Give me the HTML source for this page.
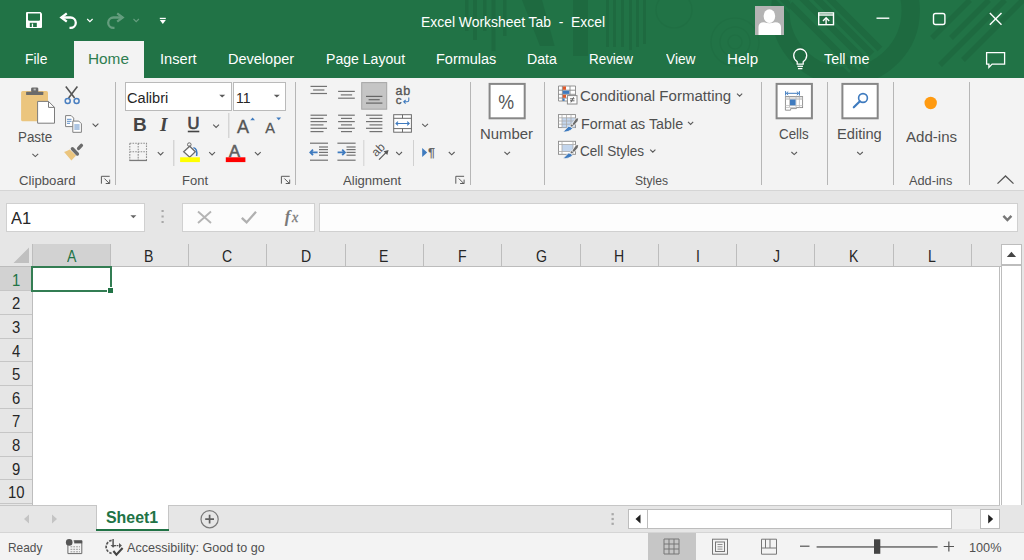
<!DOCTYPE html>
<html><head><meta charset="utf-8"><style>
html,body{margin:0;padding:0;width:1024px;height:560px;overflow:hidden;background:#fff;}
body{position:relative;font-family:"Liberation Sans",sans-serif;}
.r{position:absolute;}
.t{position:absolute;white-space:pre;transform-origin:0 0;}
svg{position:absolute;left:0;top:0;}
</style></head><body>
<div class="r" style="left:0px;top:0px;width:1024px;height:78px;background:#217346;"></div><div class="r" style="left:74px;top:41px;width:70px;height:37px;background:#f3f3f3;"></div><div class="r" style="left:0px;top:78px;width:1024px;height:112px;background:#f3f3f3;"></div><div class="r" style="left:0px;top:190px;width:1024px;height:1px;background:#d5d5d5;"></div><div class="r" style="left:0px;top:191px;width:1024px;height:53px;background:#e6e6e6;"></div><div class="r" style="left:115px;top:82px;width:1px;height:103px;background:#b6b6b6;"></div><div class="r" style="left:295px;top:82px;width:1px;height:103px;background:#b6b6b6;"></div><div class="r" style="left:470px;top:82px;width:1px;height:103px;background:#b6b6b6;"></div><div class="r" style="left:544px;top:82px;width:1px;height:103px;background:#b6b6b6;"></div><div class="r" style="left:761px;top:82px;width:1px;height:103px;background:#b6b6b6;"></div><div class="r" style="left:827px;top:82px;width:1px;height:103px;background:#b6b6b6;"></div><div class="r" style="left:893px;top:82px;width:1px;height:103px;background:#b6b6b6;"></div><div class="r" style="left:969px;top:82px;width:1px;height:103px;background:#b6b6b6;"></div><div class="r" style="left:6px;top:203px;width:139px;height:29px;background:#fff;box-sizing:border-box;border:1px solid #d0d0d0;"></div><div class="r" style="left:182px;top:203px;width:133px;height:29px;background:#fcfcfc;box-sizing:border-box;border:1px solid #d0d0d0;"></div><div class="r" style="left:319px;top:203px;width:699px;height:29px;background:#fdfdfd;box-sizing:border-box;border:1px solid #d0d0d0;"></div><div class="r" style="left:0px;top:244px;width:1001px;height:23px;background:#e6e6e6;"></div><div class="r" style="left:32px;top:244px;width:78px;height:22px;background:#d2d2d2;"></div><div class="r" style="left:0px;top:266px;width:1001px;height:1px;background:#bcbcbc;"></div><div class="r" style="left:32px;top:244px;width:1px;height:22px;background:#bdbdbd;"></div><div class="r" style="left:110px;top:244px;width:1px;height:22px;background:#bdbdbd;"></div><div class="r" style="left:188px;top:244px;width:1px;height:22px;background:#bdbdbd;"></div><div class="r" style="left:266px;top:244px;width:1px;height:22px;background:#bdbdbd;"></div><div class="r" style="left:345px;top:244px;width:1px;height:22px;background:#bdbdbd;"></div><div class="r" style="left:423px;top:244px;width:1px;height:22px;background:#bdbdbd;"></div><div class="r" style="left:501px;top:244px;width:1px;height:22px;background:#bdbdbd;"></div><div class="r" style="left:580px;top:244px;width:1px;height:22px;background:#bdbdbd;"></div><div class="r" style="left:658px;top:244px;width:1px;height:22px;background:#bdbdbd;"></div><div class="r" style="left:736px;top:244px;width:1px;height:22px;background:#bdbdbd;"></div><div class="r" style="left:814px;top:244px;width:1px;height:22px;background:#bdbdbd;"></div><div class="r" style="left:893px;top:244px;width:1px;height:22px;background:#bdbdbd;"></div><div class="r" style="left:971px;top:244px;width:1px;height:22px;background:#bdbdbd;"></div><div class="r" style="left:0px;top:267px;width:33px;height:238px;background:#e6e6e6;"></div><div class="r" style="left:0px;top:267px;width:32px;height:23px;background:#d2d2d2;"></div><div class="r" style="left:32px;top:267px;width:1px;height:238px;background:#bdbdbd;"></div><div class="r" style="left:0px;top:290px;width:32px;height:1px;background:#c6c6c6;"></div><div class="r" style="left:0px;top:314px;width:32px;height:1px;background:#c6c6c6;"></div><div class="r" style="left:0px;top:338px;width:32px;height:1px;background:#c6c6c6;"></div><div class="r" style="left:0px;top:361px;width:32px;height:1px;background:#c6c6c6;"></div><div class="r" style="left:0px;top:385px;width:32px;height:1px;background:#c6c6c6;"></div><div class="r" style="left:0px;top:408px;width:32px;height:1px;background:#c6c6c6;"></div><div class="r" style="left:0px;top:432px;width:32px;height:1px;background:#c6c6c6;"></div><div class="r" style="left:0px;top:456px;width:32px;height:1px;background:#c6c6c6;"></div><div class="r" style="left:0px;top:479px;width:32px;height:1px;background:#c6c6c6;"></div><div class="r" style="left:0px;top:503px;width:32px;height:1px;background:#c6c6c6;"></div><div class="r" style="left:33px;top:267px;width:966px;height:238px;background:#ffffff;"></div><div class="r" style="left:999px;top:266px;width:1px;height:240px;background:#bdbdbd;"></div><div class="r" style="left:31px;top:266px;width:81px;height:26px;background:transparent;box-sizing:border-box;border:2px solid #337d53;"></div><div class="r" style="left:108px;top:288px;width:5px;height:5px;background:#217346;border:1px solid #fff;box-sizing:content-box;left:107px;top:287px;"></div><div class="r" style="left:1001px;top:244px;width:21px;height:21px;background:#fff;box-sizing:border-box;border:1px solid #bdbdbd;"></div><div class="r" style="left:1001px;top:265px;width:21px;height:242px;background:#fff;box-sizing:border-box;border:1px solid #bdbdbd;"></div><div class="r" style="left:1022px;top:244px;width:2px;height:262px;background:#e6e6e6;"></div><div class="r" style="left:0px;top:505px;width:1024px;height:28px;background:#e6e6e6;"></div><div class="r" style="left:0px;top:505px;width:1000px;height:1px;background:#c6c6c6;"></div><div class="r" style="left:96px;top:505px;width:73px;height:25px;background:#fff;box-sizing:border-box;border-left:1px solid #c6c6c6;border-right:1px solid #c6c6c6;"></div><div class="r" style="left:96px;top:529px;width:73px;height:2px;background:#217346;"></div><div class="r" style="left:628px;top:509px;width:20px;height:20px;background:#fff;box-sizing:border-box;border:1px solid #bdbdbd;"></div><div class="r" style="left:647px;top:509px;width:305px;height:20px;background:#fff;box-sizing:border-box;border:1px solid #bdbdbd;"></div><div class="r" style="left:952px;top:509px;width:28px;height:20px;background:#f0f0f0;"></div><div class="r" style="left:980px;top:509px;width:20px;height:20px;background:#fff;box-sizing:border-box;border:1px solid #bdbdbd;"></div><div class="r" style="left:0px;top:533px;width:1024px;height:27px;background:#f3f3f3;"></div><div class="r" style="left:0px;top:532px;width:1024px;height:1px;background:#d5d5d5;"></div><div class="r" style="left:648px;top:533px;width:48px;height:27px;background:#c6c6c6;"></div>
<svg width="1024" height="560" viewBox="0 0 1024 560">
<!-- header decorations -->
<defs><clipPath id="hc"><rect x="0" y="0" width="1024" height="78"/></clipPath></defs><g clip-path="url(#hc)">
<g fill="#1e6a40">
  <rect x="465" y="0" width="3.5" height="31"/><rect x="473" y="0" width="4" height="40"/>
  <rect x="483" y="0" width="3.5" height="31"/><rect x="491.5" y="0" width="4" height="51"/>
  <rect x="503" y="0" width="3.5" height="36"/>
  <path d="M522,0 h20 l12.6,46 h-14.6z"/><rect x="573" y="0" width="15" height="56"/>
  <rect x="606" y="0" width="3" height="47"/><rect x="613" y="0" width="3" height="47"/>
  <rect x="621" y="0" width="3" height="47"/><rect x="629" y="0" width="3" height="50"/>
  <rect x="636" y="0" width="3" height="47"/><rect x="643" y="0" width="3" height="44"/>
</g>
<g fill="none" stroke="#1e6a40">
  <circle cx="845.5" cy="10.8" r="65.2" stroke-width="18.3"/>
</g>
<g fill="none" stroke="#1e6a40" stroke-width="1.2" opacity="0.4">
  <circle cx="674" cy="10" r="18"/>
  <circle cx="735" cy="42" r="24"/><circle cx="735" cy="42" r="15"/><circle cx="735" cy="42" r="7"/>
</g>
<g stroke="#1e6a40" stroke-width="6.5">
  <line x1="790" y1="4" x2="852" y2="66"/><line x1="801" y1="-3" x2="862" y2="58"/>
  <line x1="812" y1="-6" x2="872" y2="54"/><line x1="823" y1="-8" x2="880" y2="49"/>
</g>
<defs><clipPath id="ringc"><path d="M845.5,10.8 m-74.3,0 a74.3,74.3 0 1 0 148.6,0 a74.3,74.3 0 1 0 -148.6,0z M845.5,10.8 m-56,0 a56,56 0 1 1 112,0 a56,56 0 1 1 -112,0z" clip-rule="evenodd"/></clipPath></defs>
<g stroke="#217346" stroke-width="2.6" clip-path="url(#ringc)">
  <line x1="774" y1="-4" x2="850" y2="72"/><line x1="784" y1="-6" x2="860" y2="70"/>
  <line x1="795" y1="-5" x2="868" y2="68"/>
</g>
<g stroke="#1e6a40" stroke-width="5.5">
  <line x1="932" y1="38" x2="970" y2="0"/><line x1="951" y1="38" x2="989" y2="0"/>
  <line x1="940" y1="65" x2="1005" y2="0"/><line x1="963" y1="60" x2="1024" y2="-1"/>
</g>
</g>
<!-- QAT -->
<g>
  <path d="M27,12 h13.5 l1.5,1.5 v13.4 a1,1 0 0 1 -1,1 h-14 a1,1 0 0 1 -1,-1 v-13.9 a1,1 0 0 1 1,-1z" fill="#fff"/>
  <path d="M28,13.6 h12 v6 a1.2,1.2 0 0 1 -1.2,1.2 h-9.6 a1.2,1.2 0 0 1 -1.2,-1.2z" fill="#217346"/>
  <rect x="29.8" y="22.8" width="7" height="4.2" fill="#217346"/>
  <rect x="31.8" y="23.6" width="1.3" height="3.4" fill="#fff"/>
  <path d="M61.5,17.5 H70.5 A5.3,5.2 0 0 1 70.5,27.9 H69.5" fill="none" stroke="#fff" stroke-width="2.3"/>
  <path d="M66.8,13.3 L61.3,17.5 L66.8,21.7" fill="none" stroke="#fff" stroke-width="2.3" stroke-linejoin="miter"/>
  <path d="M87.2,19 l2.7,2.6 l2.7,-2.6" fill="none" stroke="#fff" stroke-width="1.2"/>
  <g opacity="0.3">
    <path d="M122.5,17.5 H113.5 A5.3,5.2 0 0 0 113.5,27.9 H114.5" fill="none" stroke="#fff" stroke-width="2.3"/>
    <path d="M117.2,13.3 L122.7,17.5 L117.2,21.7" fill="none" stroke="#fff" stroke-width="2.3"/>
    <path d="M133.5,19 l2.7,2.6 l2.7,-2.6" fill="none" stroke="#fff" stroke-width="1.2"/>
  </g>
  <rect x="159.8" y="17.8" width="6" height="1.3" fill="#fff"/>
  <path d="M159.8,19.9 h6 l-3,4.1z" fill="#fff"/>
</g>
<!-- avatar & window controls -->
<rect x="755" y="6" width="29" height="29" fill="#b4b4b4"/>
<ellipse cx="769.4" cy="16.1" rx="5.8" ry="6.8" fill="#fff"/>
<path d="M758.5,35 V27 Q758.5,22.5 764,22.3 Q769.4,24 775,22.3 Q781,22.5 781,27 V35z" fill="#fff"/>
<g fill="none" stroke="#fff" stroke-width="1.4">
  <rect x="818.7" y="12.9" width="14.8" height="11.8"/>
  <line x1="818.7" y1="15" x2="833.5" y2="15"/>
  <line x1="826.1" y1="18" x2="826.1" y2="24.7"/>
  <path d="M823,21 l3.1,-3.2 l3.1,3.2"/>
  <line x1="876.5" y1="18.2" x2="889.3" y2="18.2"/>
  <rect x="933.5" y="13.5" width="11.4" height="11" rx="2"/>
  <line x1="989.8" y1="13" x2="1001.5" y2="24.7"/><line x1="1001.5" y1="13" x2="989.8" y2="24.7"/>
</g>
<!-- tell me bulb & comment -->
<g fill="none" stroke="#fff" stroke-width="1.3">
  <path d="M797.2,64.2 v-2.4 q-3.5,-2.6 -3.5,-6.3 a6.5,6.5 0 0 1 13,0 q0,3.7 -3.5,6.3 v2.4z"/>
  <line x1="797.4" y1="66.3" x2="803" y2="66.3"/>
  <line x1="798" y1="68.6" x2="802.4" y2="68.6"/>
  <path d="M986.6,52.6 h18 v11.5 h-12.5 l-3.2,3.3 v-3.3 h-2.3z"/>
</g>
<rect x="21.1" y="90.9" width="26.9" height="30.4" rx="1.6" fill="#ebc57e"/>
<rect x="26.1" y="91.7" width="17.2" height="3.4" rx="0.6" fill="#6b6b6b"/>
<rect x="31.1" y="87.4" width="7.2" height="5" rx="1.4" fill="#6b6b6b"/>
<rect x="33.6" y="88.6" width="2.2" height="1.8" fill="#b9b9b9"/>
<path d="M37.6,101.4 h10.9 l6,6 v15.8 h-16.9z" fill="#fff" stroke="#7c7c7c" stroke-width="1"/>
<path d="M48.5,101.4 v6 h6" fill="none" stroke="#7c7c7c" stroke-width="1"/>
<path d="M32.4,153.8 l2.9,2.8 l2.9,-2.8" fill="none" stroke="#5a5a5a" stroke-width="1.1"/>
<path d="M65.8,86.6 L74.6,98 M77.4,86.6 L68.6,98" stroke="#555" stroke-width="1.6" fill="none"/>
<circle cx="67.7" cy="100.9" r="2.5" fill="none" stroke="#4a7fc0" stroke-width="1.5"/>
<circle cx="76.6" cy="100.9" r="2.5" fill="none" stroke="#4a7fc0" stroke-width="1.5"/>
<path d="M65.6,115.6 h5.6 l2.5,2.5 v8.5 h-8.1z" fill="#fff" stroke="#808080" stroke-width="1"/>
<path d="M67,119.3 h4.5 M67,121.3 h4.5 M67,123.3 h3" stroke="#4a7fc0" stroke-width="0.9"/>
<path d="M72.8,121.1 h6 l2.6,2.6 v8.6 h-8.6z" fill="#fff" stroke="#808080" stroke-width="1"/>
<path d="M74.3,125 h5.3 M74.3,127 h5.3 M74.3,129 h5.3" stroke="#4a7fc0" stroke-width="0.9"/>
<path d="M92.6,123.6 l2.9,2.8 l2.9,-2.8" fill="none" stroke="#5a5a5a" stroke-width="1.1"/>
<path d="M64.1,152 Q66.5,151.6 69.7,149.6 L76.1,155.5 L71.4,160.6z" fill="#ebc57e"/>
<path d="M72.4,148.8 L77.4,154" stroke="#6b6b6b" stroke-width="3.4" stroke-linecap="round"/>
<path d="M78.6,148.4 L81.4,145.4" stroke="#6b6b6b" stroke-width="3.4" stroke-linecap="round"/>
<path d="M101.4,183.70000000000002 V176.3 H109.7 M104.4,178.5 L109.4,183.5 M105.7,183.5 H109.7 V179.60000000000002" fill="none" stroke="#5a5a5a" stroke-width="1"/>
<rect x="125.5" y="82.5" width="106" height="28" fill="#fff" stroke="#bababa" stroke-width="1"/>
<rect x="233.5" y="82.5" width="52" height="28" fill="#fff" stroke="#bababa" stroke-width="1"/>
<path d="M219.2,94.8 h6 l-3.0,2.8z" fill="#5a5a5a"/>
<path d="M273.8,94.8 h6 l-3.0,2.8z" fill="#5a5a5a"/>
<text x="133" y="130.5" font-family="Liberation Sans" font-weight="700" font-size="19" fill="#444">B</text>
<text x="160" y="130.5" font-family="Liberation Serif" font-style="italic" font-weight="700" font-size="19" fill="#444">I</text>
<text x="187.6" y="129" font-family="Liberation Sans" font-size="16.5" fill="#444" stroke="#444" stroke-width="0.7">U</text>
<rect x="187.8" y="130.7" width="11.5" height="1.6" fill="#444"/>
<path d="M213.2,124.6 l2.9,2.8 l2.9,-2.8" fill="none" stroke="#5a5a5a" stroke-width="1.1"/>
<rect x="228.3" y="113" width="1" height="25" fill="#c8c8c8"/>
<text x="237" y="133" font-family="Liberation Sans" font-size="18" fill="#555" stroke="#555" stroke-width="0.35">A</text>
<path d="M250.2,120.2 l2.4,-2.8 l2.4,2.8z" fill="#3f7bbf"/>
<text x="265.3" y="132.5" font-family="Liberation Sans" font-size="14.5" fill="#555" stroke="#555" stroke-width="0.3">A</text>
<path d="M276.3,117.5 l2.4,2.8 l2.4,-2.8z" fill="#3f7bbf"/>
<path d="M129.8,143.3 H146.5 V160.3 M129.8,143.3 V160.3 M138.2,143.3 V160.3 M129.8,151.8 H146.5" fill="none" stroke="#8f8f8f" stroke-width="1.1" stroke-dasharray="1.6,1.1"/>
<rect x="129.3" y="159.8" width="17.7" height="1.3" fill="#7a7a7a"/>
<path d="M157.8,152.2 l2.8,2.8 l2.8,-2.8" fill="none" stroke="#5a5a5a" stroke-width="1.1"/>
<rect x="173.3" y="140" width="1" height="26" fill="#c8c8c8"/>
<path d="M183.7,151.7 L189.7,146.2 L195.3,151.7 L189.7,157.2 z" fill="#fff" stroke="#6b6b6b" stroke-width="1.3"/>
<circle cx="189.3" cy="144.6" r="1.8" fill="none" stroke="#6b6b6b" stroke-width="1"/>
<path d="M193.4,147.6 Q197.8,148.8 196.6,156" fill="none" stroke="#3f7bbf" stroke-width="1.5"/>
<rect x="180.1" y="157.3" width="19.8" height="4.8" fill="#ffff00"/>
<path d="M209.2,152.2 l2.9,2.7 l2.9,-2.7" fill="none" stroke="#5a5a5a" stroke-width="1.1"/>
<text x="229" y="156.8" font-family="Liberation Sans" font-size="16.5" fill="#606060" stroke="#606060" stroke-width="0.6">A</text>
<rect x="225.8" y="157.3" width="19.6" height="4.8" fill="#ff0000"/>
<path d="M254.9,152.2 l2.9,2.7 l2.9,-2.7" fill="none" stroke="#5a5a5a" stroke-width="1.1"/>
<path d="M281.4,183.70000000000002 V176.3 H289.7 M284.4,178.5 L289.4,183.5 M285.7,183.5 H289.7 V179.60000000000002" fill="none" stroke="#5a5a5a" stroke-width="1"/>
<rect x="310.5" y="85.80000000000001" width="16.5" height="1.2" fill="#737373"/>
<rect x="313.1" y="89.4" width="11.299999999999955" height="1.2" fill="#737373"/>
<rect x="310.5" y="92.9" width="16.5" height="1.2" fill="#737373"/>
<rect x="338.1" y="90.80000000000001" width="16.69999999999999" height="1.2" fill="#737373"/>
<rect x="340.8" y="94.30000000000001" width="11.300000000000011" height="1.2" fill="#737373"/>
<rect x="338.1" y="97.60000000000001" width="16.69999999999999" height="1.2" fill="#737373"/>
<rect x="361.7" y="82.6" width="25" height="26.6" fill="#c5c5c5" stroke="#a6a6a6" stroke-width="1"/>
<rect x="366" y="95.80000000000001" width="16.399999999999977" height="1.2" fill="#666"/>
<rect x="368.6" y="99.10000000000001" width="11.099999999999966" height="1.2" fill="#666"/>
<rect x="366" y="102.5" width="16.399999999999977" height="1.2" fill="#666"/>
<text x="395.6" y="95.3" font-family="Liberation Sans" font-size="12.5" letter-spacing="0.6" fill="#555" stroke="#555" stroke-width="0.35">ab</text>
<text x="395.8" y="103.8" font-family="Liberation Sans" font-size="11.5" fill="#555" stroke="#555" stroke-width="0.35">c</text>
<path d="M408.8,97.6 v2.6 q0,1.6 -1.6,1.6 h-3 M405.6,100 l-1.8,1.8 l1.8,1.8" fill="none" stroke="#3f7bbf" stroke-width="1.1"/>
<rect x="310.5" y="114.60000000000001" width="16.5" height="1.2" fill="#737373"/>
<rect x="338.1" y="114.60000000000001" width="16.69999999999999" height="1.2" fill="#737373"/>
<rect x="366" y="114.60000000000001" width="16.399999999999977" height="1.2" fill="#737373"/>
<rect x="310.5" y="117.80000000000001" width="13.0" height="1.2" fill="#737373"/>
<rect x="341" y="117.80000000000001" width="11" height="1.2" fill="#737373"/>
<rect x="369.5" y="117.80000000000001" width="12.899999999999977" height="1.2" fill="#737373"/>
<rect x="310.5" y="121.0" width="16.5" height="1.2" fill="#737373"/>
<rect x="338.1" y="121.0" width="16.69999999999999" height="1.2" fill="#737373"/>
<rect x="366" y="121.0" width="16.399999999999977" height="1.2" fill="#737373"/>
<rect x="310.5" y="124.30000000000001" width="13.0" height="1.2" fill="#737373"/>
<rect x="341" y="124.30000000000001" width="11" height="1.2" fill="#737373"/>
<rect x="369.5" y="124.30000000000001" width="12.899999999999977" height="1.2" fill="#737373"/>
<rect x="310.5" y="127.70000000000002" width="16.5" height="1.2" fill="#737373"/>
<rect x="338.1" y="127.70000000000002" width="16.69999999999999" height="1.2" fill="#737373"/>
<rect x="366" y="127.70000000000002" width="16.399999999999977" height="1.2" fill="#737373"/>
<rect x="310.5" y="131.0" width="13.0" height="1.2" fill="#737373"/>
<rect x="341" y="131.0" width="11" height="1.2" fill="#737373"/>
<rect x="369.5" y="131.0" width="12.899999999999977" height="1.2" fill="#737373"/>
<rect x="393.7" y="114.7" width="17.7" height="17.5" fill="#fff" stroke="#6b6b6b" stroke-width="1"/>
<path d="M393.7,118.3 H411.4 M393.7,128.6 H411.4 M402.5,114.7 V118.3 M402.5,128.6 V132.2" stroke="#6b6b6b" stroke-width="1" fill="none"/>
<path d="M396,123.5 H409.2 M398,121.6 l-2,1.9 l2,1.9 M407.2,121.6 l2,1.9 l-2,1.9" stroke="#3f7bbf" stroke-width="1.1" fill="none"/>
<path d="M422.2,123.8 l2.9,2.8 l2.9,-2.8" fill="none" stroke="#5a5a5a" stroke-width="1.1"/>
<rect x="310" y="142.6" width="18" height="1.2" fill="#737373"/>
<rect x="310" y="159.6" width="18" height="1.2" fill="#737373"/>
<rect x="319" y="146.4" width="9" height="1.2" fill="#737373"/>
<rect x="346.5" y="146.4" width="9.100000000000023" height="1.2" fill="#737373"/>
<rect x="319" y="149.0" width="9" height="1.2" fill="#737373"/>
<rect x="346.5" y="149.0" width="9.100000000000023" height="1.2" fill="#737373"/>
<rect x="319" y="151.8" width="9" height="1.2" fill="#737373"/>
<rect x="346.5" y="151.8" width="9.100000000000023" height="1.2" fill="#737373"/>
<rect x="319" y="154.6" width="9" height="1.2" fill="#737373"/>
<rect x="346.5" y="154.6" width="9.100000000000023" height="1.2" fill="#737373"/>
<rect x="337.4" y="142.6" width="18.200000000000045" height="1.2" fill="#737373"/>
<rect x="337.4" y="159.6" width="18.200000000000045" height="1.2" fill="#737373"/>
<path d="M317.6,152.4 H310.5 M313,149.6 l-2.7,2.8 l2.7,2.8" stroke="#3f7bbf" stroke-width="1.8" fill="none"/>
<path d="M337.6,152.4 H344.8 M342.2,149.6 l2.7,2.8 l-2.7,2.8" stroke="#3f7bbf" stroke-width="1.8" fill="none"/>
<rect x="363.3" y="140" width="1" height="26" fill="#d0d0d0"/>
<text x="0" y="0" font-family="Liberation Sans" font-size="12" fill="#555" transform="translate(376.3,157.3) rotate(-45)">ab</text>
<path d="M379,159.6 L386.2,152.4" stroke="#555" stroke-width="1.2" fill="none"/>
<path d="M388.6,150 L383.6,151.3 L387.3,155z" fill="#555"/>
<path d="M396.2,152 l2.9,2.8 l2.9,-2.8" fill="none" stroke="#5a5a5a" stroke-width="1.1"/>
<rect x="413" y="140" width="1" height="26" fill="#d0d0d0"/>
<path d="M422.2,148 L427.2,152.5 L422.2,157z" fill="#3f7bbf"/>
<text x="428" y="157.3" font-family="Liberation Sans" font-size="12.5" font-weight="700" fill="#666">¶</text>
<path d="M448.8,152 l2.9,2.8 l2.9,-2.8" fill="none" stroke="#5a5a5a" stroke-width="1.1"/>
<path d="M455.8,183.70000000000002 V176.3 H464.1 M458.8,178.5 L463.8,183.5 M460.1,183.5 H464.1 V179.60000000000002" fill="none" stroke="#5a5a5a" stroke-width="1"/>
<rect x="489.6" y="83.9" width="35.1" height="34.4" fill="#fff" stroke="#878787" stroke-width="2"/>
<text x="0" y="0" font-family="Liberation Sans" font-size="21" fill="#555" transform="translate(498.2,108.8) scale(0.85,1)">%</text>
<path d="M504.4,151.8 l2.8,2.7 l2.8,-2.7" fill="none" stroke="#5a5a5a" stroke-width="1.1"/>
<path d="M558.5,86 H575.5 V101 H558.5z M558.5,90.2 H575.5 M558.5,94.3 H575.5 M558.5,98 H575.5 M562.4,86 V101 M570,86 V101" fill="#fff" stroke="#8a8a8a" stroke-width="0.9"/>
<rect x="562.8" y="86.4" width="3.2" height="3.4" fill="#e05a2b"/>
<rect x="562.8" y="90.7" width="6.5" height="3.2" fill="#3f7bbf"/>
<rect x="562.8" y="94.8" width="3.2" height="3" fill="#e05a2b"/>
<rect x="562.8" y="98.4" width="1.8" height="2.5" fill="#3f7bbf"/>
<rect x="567.4" y="95.6" width="9.6" height="8.4" fill="#fff" stroke="#8a8a8a" stroke-width="1"/>
<path d="M570,98.8 h4.5 M570,100.8 h4.5 M573.6,97.2 L570.9,102.4" stroke="#555" stroke-width="0.9" fill="none"/>
<path d="M737,93.6 l2.6,2.6 l2.6,-2.6" fill="none" stroke="#5a5a5a" stroke-width="1.1"/>
<rect x="558.5" y="114.6" width="17" height="13" fill="#fff" stroke="#8a8a8a" stroke-width="0.9"/>
<rect x="562" y="117.8" width="13" height="9.5" fill="#c3d6ee"/>
<path d="M558.5,117.8 H575.5 M558.5,121.0 H575.5 M558.5,124.19999999999999 H575.5 M562,114.6 V127.6 M566.5,114.6 V127.6 M571,114.6 V127.6" stroke="#a9a9a9" stroke-width="0.8" fill="none"/>
<path d="M572.2,124.39999999999999 L576,118.8 L578.2,118.19999999999999 L577.6,121.0 L573.6,125.6z" fill="#6b6b6b" stroke="#f3f3f3" stroke-width="1.4"/>
<path d="M572.2,124.39999999999999 L576,118.8 L578.2,118.19999999999999 L577.6,121.0 L573.6,125.6z" fill="#6b6b6b"/>
<circle cx="571.8" cy="125.6" r="1.5" fill="#6b6b6b" stroke="#f3f3f3" stroke-width="0.8"/>
<path d="M563,131.9 L568.6,126.19999999999999 Q571,126.5 572.6,128.6 Q569,132.4 563,131.9z" fill="#3f7bbf" stroke="#f3f3f3" stroke-width="0.8"/>
<path d="M688,121.8 l2.6,2.6 l2.6,-2.6" fill="none" stroke="#5a5a5a" stroke-width="1.1"/>
<rect x="558.5" y="141.3" width="17" height="13" fill="#fff" stroke="#8a8a8a" stroke-width="0.9"/>
<rect x="562" y="144.5" width="11" height="7" fill="#c3d6ee"/>
<path d="M558.5,144.5 H575.5 M558.5,151.5 H575.5 M562,141.3 V154.3 M573,141.3 V154.3" stroke="#a9a9a9" stroke-width="0.8" fill="none"/>
<path d="M572.2,151.10000000000002 L576,145.5 L578.2,144.9 L577.6,147.70000000000002 L573.6,152.3z" fill="#6b6b6b" stroke="#f3f3f3" stroke-width="1.4"/>
<path d="M572.2,151.10000000000002 L576,145.5 L578.2,144.9 L577.6,147.70000000000002 L573.6,152.3z" fill="#6b6b6b"/>
<circle cx="571.8" cy="152.3" r="1.5" fill="#6b6b6b" stroke="#f3f3f3" stroke-width="0.8"/>
<path d="M563,158.60000000000002 L568.6,152.9 Q571,153.20000000000002 572.6,155.3 Q569,159.10000000000002 563,158.60000000000002z" fill="#3f7bbf" stroke="#f3f3f3" stroke-width="0.8"/>
<path d="M650.2,149.6 l2.6,2.6 l2.6,-2.6" fill="none" stroke="#5a5a5a" stroke-width="1.1"/>
<rect x="776.6" y="83.9" width="35.3" height="34.4" fill="#fff" stroke="#878787" stroke-width="2"/>
<path d="M785.6,91.1 V95.6 M799.4,91.1 V95.6 M786.4,93.3 H798.6 M788.2,91.6 l-1.8,1.7 l1.8,1.7 M796.8,91.6 l1.8,1.7 l-1.8,1.7" stroke="#3f7bbf" stroke-width="1" fill="none"/>
<rect x="785.4" y="96.6" width="17.2" height="11" fill="#fff" stroke="#8a8a8a" stroke-width="0.9"/>
<rect x="785.8" y="97" width="16.4" height="2.2" fill="#e2e2e2"/>
<path d="M785.4,99.2 H802.6 M785.4,105.6 H802.6 M789.5,96.6 V107.6 M796,96.6 V107.6 M799.4,96.6 V107.6" stroke="#bdbdbd" stroke-width="0.8" fill="none"/>
<rect x="790" y="99.5" width="5.6" height="5.8" fill="#3f7bbf"/>
<path d="M785.4,107.6 V110.2 H790.6 V108.6 H796.4 V107.6" stroke="#8a8a8a" stroke-width="0.9" fill="#fff"/>
<path d="M791.4,152 l2.8,2.6 l2.8,-2.6" fill="none" stroke="#5a5a5a" stroke-width="1.1"/>
<rect x="842.4" y="83.9" width="35.3" height="34.4" fill="#fff" stroke="#878787" stroke-width="2"/>
<circle cx="863" cy="98" r="4.4" fill="none" stroke="#3f7bbf" stroke-width="1.6"/>
<path d="M859.9,101.2 L853.8,107.3" stroke="#3f7bbf" stroke-width="2.2" stroke-linecap="round"/>
<path d="M857.2,152 l2.8,2.6 l2.8,-2.6" fill="none" stroke="#5a5a5a" stroke-width="1.1"/>
<circle cx="930.7" cy="103" r="6.2" fill="#ff9a10"/>
<path d="M997.5,183.6 L1005.5,176 L1013.5,183.6" fill="none" stroke="#555" stroke-width="1.3"/>
<path d="M130.4,215.2 h6 l-3.0,3z" fill="#666"/>
<rect x="161.5" y="210" width="2.2" height="2" fill="#a8a8a8"/>
<rect x="161.5" y="215.5" width="2.2" height="2" fill="#a8a8a8"/>
<rect x="161.5" y="221" width="2.2" height="2" fill="#a8a8a8"/>
<path d="M198,211.5 L211,223 M211,211.5 L198,223" stroke="#b4b4b4" stroke-width="1.9" fill="none"/>
<path d="M241.8,217.8 L246.6,222.4 L256,211.8" stroke="#b0b0b0" stroke-width="2.3" fill="none"/>
<text x="284.8" y="222.4" font-family="Liberation Serif" font-style="italic" font-weight="700" font-size="17" fill="#7a7a7a">f</text>
<text x="292" y="222.4" font-family="Liberation Serif" font-style="italic" font-size="14" fill="#7a7a7a" stroke="#7a7a7a" stroke-width="0.3">x</text>
<path d="M1003.4,215.8 L1007.4,220 L1011.4,215.8" fill="none" stroke="#777" stroke-width="2.4"/>
<path d="M29,247.5 V263 H13.5z" fill="#c0c0c0"/>
<path d="M1006.8,257.1 h9.3 l-4.65,-5.3z" fill="#444"/>
<path d="M29,514.6 L24,519 L29,523.4z" fill="#c4c4c4"/>
<path d="M52,514.6 L57,519 L52,523.4z" fill="#c4c4c4"/>
<circle cx="209.6" cy="519.2" r="8.6" fill="none" stroke="#7a7a7a" stroke-width="1.2"/>
<path d="M205.2,519.2 h8.8 M209.6,514.8 v8.8" stroke="#606060" stroke-width="1.7"/>
<rect x="611.5" y="513.1" width="2.3" height="2.2" fill="#a8a8a8"/>
<rect x="611.5" y="517.9" width="2.3" height="2.2" fill="#a8a8a8"/>
<rect x="611.5" y="522.6999999999999" width="2.3" height="2.2" fill="#a8a8a8"/>
<path d="M640.5,514.6 L635.5,519 L640.5,523.4z" fill="#222"/>
<path d="M988.2,514.6 L993.2,519 L988.2,523.4z" fill="#222"/>
<circle cx="69.2" cy="542.4" r="3.3" fill="#555"/>
<path d="M67.9,545 V553.6 H81.8 V540.9 H73.5" fill="none" stroke="#6a6a6a" stroke-width="1"/>
<rect x="74.2" y="540.4" width="8" height="3" fill="#555"/>
<path d="M70.5,546.8 H80 M70.5,549.3 H80 M70.5,551.8 H80" stroke="#8a8a8a" stroke-width="0.9" stroke-dasharray="1.8,1"/>
<path d="M111.6,540.4 A6.6,6.6 0 0 0 111.6,553.4" fill="none" stroke="#555" stroke-width="1.7" stroke-dasharray="2.6,1.3"/>
<path d="M113.1,539 V545.5" stroke="#555" stroke-width="1.5" fill="none"/>
<path d="M110.5,545 h5.2 l-2.6,2.8z" fill="#555"/>
<path d="M114.4,545.7 H119.6" stroke="#555" stroke-width="1.3" fill="none" stroke-dasharray="1.6,0.6"/>
<path d="M119,543 v5.2 l2.9,-2.6z" fill="#555"/>
<path d="M113.4,551 L116.4,554.6 L122.6,548" stroke="#444" stroke-width="2.1" fill="none"/>
<path d="M664,539 H679 V554 H664z M664,544 H679 M664,549 H679 M669,539 V554 M674,539 V554" fill="none" stroke="#777" stroke-width="1"/>
<rect x="712.5" y="539.2" width="15" height="15" fill="none" stroke="#777" stroke-width="1"/>
<rect x="715.5" y="542" width="9" height="9.5" fill="none" stroke="#777" stroke-width="1"/>
<path d="M717.5,544.5 h5 M717.5,546.8 h5 M717.5,549.1 h5" stroke="#777" stroke-width="0.8"/>
<path d="M761.5,539.2 H776.5 V554.2 H761.5z M761.5,548 H776.5 M765.5,539.2 V548 M770,539.2 V548" fill="none" stroke="#777" stroke-width="1"/>
<rect x="800" y="545.6" width="9.5" height="1.2" fill="#555"/>
<rect x="816.6" y="546.3" width="121" height="1.3" fill="#555"/>
<rect x="874" y="539.3" width="6.3" height="14.5" fill="#444"/>
<path d="M943.7,546.5 H954 M948.85,541.4 V551.6" stroke="#555" stroke-width="1.2"/>
</svg>

<div class="t" style="left:421.00px;top:13.90px;font-size:15.5px;line-height:15.5px;color:#ffffff;transform:scaleX(0.8966);">Excel Worksheet Tab  -  Excel</div><div class="t" style="left:24.90px;top:51.30px;font-size:15.5px;line-height:15.5px;color:#ffffff;transform:scaleX(0.8957);">File</div><div class="t" style="left:88.41px;top:51.30px;font-size:15.5px;line-height:15.5px;color:#2e7d50;transform:scaleX(0.9900);">Home</div><div class="t" style="left:159.66px;top:51.30px;font-size:15.5px;line-height:15.5px;color:#ffffff;transform:scaleX(0.9447);">Insert</div><div class="t" style="left:228.06px;top:51.30px;font-size:15.5px;line-height:15.5px;color:#ffffff;transform:scaleX(0.9357);">Developer</div><div class="t" style="left:325.79px;top:51.30px;font-size:15.5px;line-height:15.5px;color:#ffffff;transform:scaleX(0.9081);">Page Layout</div><div class="t" style="left:435.67px;top:51.30px;font-size:15.5px;line-height:15.5px;color:#ffffff;transform:scaleX(0.9333);">Formulas</div><div class="t" style="left:527.09px;top:51.30px;font-size:15.5px;line-height:15.5px;color:#ffffff;transform:scaleX(0.9125);">Data</div><div class="t" style="left:589.13px;top:51.30px;font-size:15.5px;line-height:15.5px;color:#ffffff;transform:scaleX(0.8660);">Review</div><div class="t" style="left:665.90px;top:51.30px;font-size:15.5px;line-height:15.5px;color:#ffffff;transform:scaleX(0.8848);">View</div><div class="t" style="left:727.03px;top:51.30px;font-size:15.5px;line-height:15.5px;color:#ffffff;transform:scaleX(0.9733);">Help</div><div class="t" style="left:824.00px;top:51.30px;font-size:15.5px;line-height:15.5px;color:#ffffff;transform:scaleX(0.9245);">Tell me</div><div class="t" style="left:17.74px;top:128.60px;font-size:15.5px;line-height:15.5px;color:#505050;transform:scaleX(0.8632);">Paste</div><div class="t" style="left:18.59px;top:173.60px;font-size:13px;line-height:13px;color:#505050;transform:scaleX(1.0148);">Clipboard</div><div class="t" style="left:127.36px;top:89.80px;font-size:15.5px;line-height:15.5px;color:#262626;transform:scaleX(0.9405);">Calibri</div><div class="t" style="left:235.89px;top:89.80px;font-size:15.5px;line-height:15.5px;color:#262626;transform:scaleX(0.9067);">11</div><div class="t" style="left:182.00px;top:174.00px;font-size:13px;line-height:13px;color:#505050;">Font</div><div class="t" style="left:343.20px;top:173.50px;font-size:13px;line-height:13px;color:#505050;transform:scaleX(1.0069);">Alignment</div><div class="t" style="left:480.04px;top:126.20px;font-size:15.5px;line-height:15.5px;color:#505050;transform:scaleX(0.9630);">Number</div><div class="t" style="left:580.23px;top:88.20px;font-size:15.5px;line-height:15.5px;color:#505050;transform:scaleX(0.9695);">Conditional Formatting</div><div class="t" style="left:580.88px;top:115.70px;font-size:15.5px;line-height:15.5px;color:#505050;transform:scaleX(0.9211);">Format as Table</div><div class="t" style="left:580.33px;top:143.40px;font-size:15.5px;line-height:15.5px;color:#505050;transform:scaleX(0.8750);">Cell Styles</div><div class="t" style="left:635.37px;top:173.80px;font-size:13px;line-height:13px;color:#505050;transform:scaleX(0.9324);">Styles</div><div class="t" style="left:778.74px;top:126.20px;font-size:15.5px;line-height:15.5px;color:#505050;transform:scaleX(0.8606);">Cells</div><div class="t" style="left:837.06px;top:126.20px;font-size:15.5px;line-height:15.5px;color:#505050;transform:scaleX(0.9435);">Editing</div><div class="t" style="left:906.00px;top:128.60px;font-size:15.5px;line-height:15.5px;color:#505050;transform:scaleX(0.9731);">Add-ins</div><div class="t" style="left:909.40px;top:174.00px;font-size:13px;line-height:13px;color:#505050;transform:scaleX(0.9818);">Add-ins</div><div class="t" style="left:11.25px;top:209.75px;font-size:16.3px;line-height:16.3px;color:#262626;transform:scaleX(1.0105);">A1</div><div class="t" style="left:7.82px;top:541.00px;font-size:13.5px;line-height:13.5px;color:#505050;transform:scaleX(0.8816);">Ready</div><div class="t" style="left:126.70px;top:541.00px;font-size:13.5px;line-height:13.5px;color:#505050;transform:scaleX(0.9320);">Accessibility: Good to go</div><div class="t" style="left:968.86px;top:540.90px;font-size:13.5px;line-height:13.5px;color:#505050;transform:scaleX(0.9394);">100%</div><div class="t" style="left:105.62px;top:509.40px;font-size:16.2px;line-height:16.2px;color:#217346;font-weight:700;transform:scaleX(0.9827);">Sheet1</div><div class="t" style="left:66.88px;top:248.60px;font-size:16.8px;line-height:16.8px;color:#217346;transform:scaleX(0.84)">A</div><div class="t" style="left:144.46px;top:248.60px;font-size:16.8px;line-height:16.8px;color:#262626;transform:scaleX(0.84)">B</div><div class="t" style="left:222.46px;top:248.60px;font-size:16.8px;line-height:16.8px;color:#262626;transform:scaleX(0.84)">C</div><div class="t" style="left:300.96px;top:248.60px;font-size:16.8px;line-height:16.8px;color:#262626;transform:scaleX(0.84)">D</div><div class="t" style="left:379.46px;top:248.60px;font-size:16.8px;line-height:16.8px;color:#262626;transform:scaleX(0.84)">E</div><div class="t" style="left:457.88px;top:248.60px;font-size:16.8px;line-height:16.8px;color:#262626;transform:scaleX(0.84)">F</div><div class="t" style="left:535.54px;top:248.60px;font-size:16.8px;line-height:16.8px;color:#262626;transform:scaleX(0.84)">G</div><div class="t" style="left:614.46px;top:248.60px;font-size:16.8px;line-height:16.8px;color:#262626;transform:scaleX(0.84)">H</div><div class="t" style="left:695.82px;top:248.60px;font-size:16.8px;line-height:16.8px;color:#262626;transform:scaleX(0.84)">I</div><div class="t" style="left:772.56px;top:248.60px;font-size:16.8px;line-height:16.8px;color:#262626;transform:scaleX(0.84)">J</div><div class="t" style="left:848.96px;top:248.60px;font-size:16.8px;line-height:16.8px;color:#262626;transform:scaleX(0.84)">K</div><div class="t" style="left:928.30px;top:248.60px;font-size:16.8px;line-height:16.8px;color:#262626;transform:scaleX(0.84)">L</div><div class="t" style="left:12.00px;top:271.50px;font-size:16.5px;line-height:16.5px;color:#217346;transform:scaleX(0.9)">1</div><div class="t" style="left:12.00px;top:294.50px;font-size:16.5px;line-height:16.5px;color:#262626;transform:scaleX(0.9)">2</div><div class="t" style="left:12.00px;top:318.50px;font-size:16.5px;line-height:16.5px;color:#262626;transform:scaleX(0.9)">3</div><div class="t" style="left:12.45px;top:342.50px;font-size:16.5px;line-height:16.5px;color:#262626;transform:scaleX(0.9)">4</div><div class="t" style="left:12.00px;top:365.50px;font-size:16.5px;line-height:16.5px;color:#262626;transform:scaleX(0.9)">5</div><div class="t" style="left:12.00px;top:389.50px;font-size:16.5px;line-height:16.5px;color:#262626;transform:scaleX(0.9)">6</div><div class="t" style="left:12.00px;top:412.50px;font-size:16.5px;line-height:16.5px;color:#262626;transform:scaleX(0.9)">7</div><div class="t" style="left:12.00px;top:436.50px;font-size:16.5px;line-height:16.5px;color:#262626;transform:scaleX(0.9)">8</div><div class="t" style="left:12.00px;top:460.50px;font-size:16.5px;line-height:16.5px;color:#262626;transform:scaleX(0.9)">9</div><div class="t" style="left:7.95px;top:483.50px;font-size:16.5px;line-height:16.5px;color:#262626;transform:scaleX(0.9)">10</div>
</body></html>
